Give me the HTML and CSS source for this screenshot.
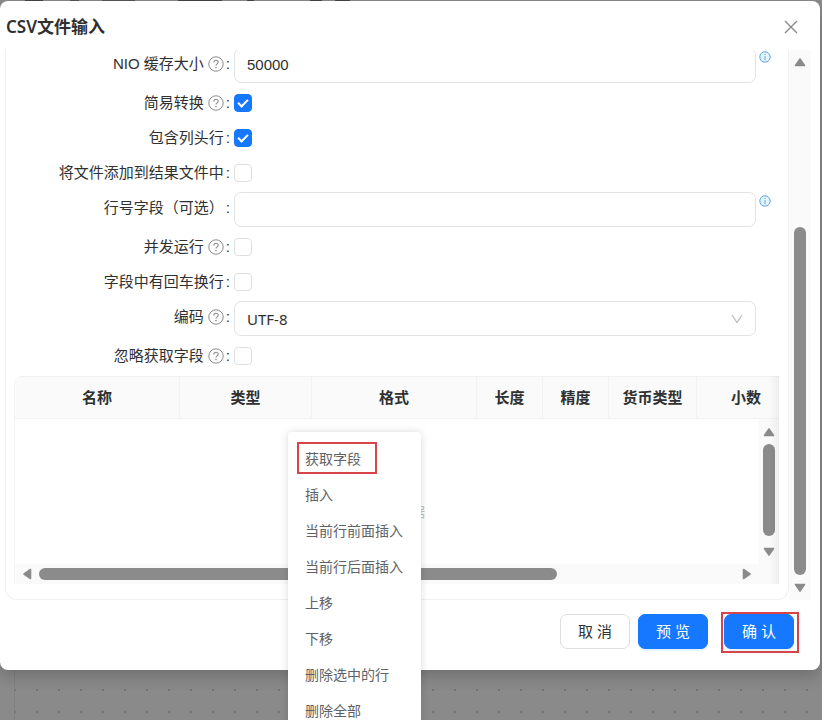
FILE: index.html
```html
<!DOCTYPE html>
<html lang="zh-CN">
<head>
<meta charset="UTF-8">
<meta name="viewport" content="width=device-width, initial-scale=1.0">
<title>CSV文件输入</title>
<link rel="stylesheet" href="styles.css">
</head>
<body>

<svg width="0" height="0" class="sprite">
  <symbol id="icon-help" viewBox="0 0 16 16">
    <circle cx="8" cy="8" r="7.2" fill="none" stroke="currentColor"/>
    <path d="M5.8 6.4c0-1.3 1-2.1 2.2-2.1s2.2.8 2.2 2c0 1.5-2.2 1.6-2.2 3.2" fill="none" stroke="currentColor" stroke-width="1.1"/>
    <circle cx="8" cy="11.6" r=".8" fill="currentColor"/>
  </symbol>
  <symbol id="icon-info" viewBox="0 0 12 12">
    <circle cx="6" cy="6" r="5.2" fill="#e6f4ff" stroke="#5aa5e6"/>
    <path d="M6 3v1M6 5v4" stroke="#5aa5e6"/>
  </symbol>
  <symbol id="icon-arrow" viewBox="0 0 12 10">
    <path d="M6 2L10.5 8.5H1.5Z" fill="#8b8b8b" stroke="#8b8b8b" stroke-width="1.6" stroke-linejoin="round"/>
  </symbol>
</svg>

<div class="modal" role="dialog" aria-labelledby="modalTitle">
  <div class="modal-header">
    <h2 id="modalTitle">CSV文件输入</h2>
    <button class="close-btn" aria-label="关闭">
      <svg width="14" height="14" viewBox="0 0 14 14"><path d="M1 1L13 13M13 1L1 13" stroke="#888" stroke-width="1.4"/></svg>
    </button>
  </div>

  <div class="modal-body">
    <div class="panel">
      <form class="form">
        <div class="row row-input">
          <label class="label" for="nio">NIO 缓存大小<svg class="help"><use href="#icon-help"/></svg><span class="colon">:</span></label>
          <input class="text-input" type="text" id="nio" value="50000">
          <svg class="info"><use href="#icon-info"/></svg>
        </div>
        <div class="row">
          <label class="label" for="lazy">简易转换<svg class="help"><use href="#icon-help"/></svg><span class="colon">:</span></label>
          <input class="checkbox" type="checkbox" id="lazy" checked>
        </div>
        <div class="row">
          <label class="label" for="header">包含列头行<span class="colon">:</span></label>
          <input class="checkbox" type="checkbox" id="header" checked>
        </div>
        <div class="row">
          <label class="label" for="addResult">将文件添加到结果文件中<span class="colon">:</span></label>
          <input class="checkbox" type="checkbox" id="addResult">
        </div>
        <div class="row row-input">
          <label class="label" for="rowNum">行号字段（可选）<span class="colon">:</span></label>
          <input class="text-input" type="text" id="rowNum">
          <svg class="info"><use href="#icon-info"/></svg>
        </div>
        <div class="row">
          <label class="label" for="parallel">并发运行<svg class="help"><use href="#icon-help"/></svg><span class="colon">:</span></label>
          <input class="checkbox" type="checkbox" id="parallel">
        </div>
        <div class="row">
          <label class="label" for="newline">字段中有回车换行<span class="colon">:</span></label>
          <input class="checkbox" type="checkbox" id="newline">
        </div>
        <div class="row row-input">
          <label class="label" for="encoding">编码<svg class="help"><use href="#icon-help"/></svg><span class="colon">:</span></label>
          <div class="select-wrap">
            <select id="encoding">
              <option>UTF-8</option>
            </select>
            <svg class="chevron" width="12" height="10" viewBox="0 0 12 10"><path d="M1 1L6 8.5L11 1" fill="none" stroke="#bfbfbf" stroke-width="1.3"/></svg>
          </div>
        </div>
        <div class="row">
          <label class="label" for="ignore">忽略获取字段<svg class="help"><use href="#icon-help"/></svg><span class="colon">:</span></label>
          <input class="checkbox" type="checkbox" id="ignore">
        </div>
      </form>

      <div class="grid">
        <table class="fields">
          <colgroup>
            <col class="col-l"><col class="col-m"><col class="col-l"><col class="col-s"><col class="col-s"><col class="col-t"><col class="col-d">
          </colgroup>
          <thead>
            <tr><th>名称</th><th>类型</th><th>格式</th><th>长度</th><th>精度</th><th>货币类型</th><th>小数</th></tr>
          </thead>
        </table>
        <div class="grid-body">
          <div class="empty">暂无数据</div>
          <div class="scroll-y">
            <svg class="arrow"><use href="#icon-arrow"/></svg>
            <div class="track"><div class="thumb"></div></div>
            <svg class="arrow down"><use href="#icon-arrow"/></svg>
          </div>
        </div>
        <div class="scroll-x">
          <svg class="arrow left"><use href="#icon-arrow"/></svg>
          <div class="track"><div class="thumb"></div></div>
          <svg class="arrow right"><use href="#icon-arrow"/></svg>
        </div>
      </div>
    </div>

    <div class="scroll-y scroll-main">
      <svg class="arrow"><use href="#icon-arrow"/></svg>
      <div class="track"><div class="thumb"></div></div>
      <svg class="arrow down"><use href="#icon-arrow"/></svg>
    </div>
  </div>

  <div class="modal-footer">
    <button class="btn">取 消</button>
    <button class="btn btn-primary">预 览</button>
    <div class="marked">
      <button class="btn btn-primary">确 认</button>
    </div>
  </div>
</div>

<div class="context-menu" role="menu">
  <button class="menu-item menu-marked" role="menuitem">获取字段</button>
  <button class="menu-item" role="menuitem">插入</button>
  <button class="menu-item" role="menuitem">当前行前面插入</button>
  <button class="menu-item" role="menuitem">当前行后面插入</button>
  <button class="menu-item" role="menuitem">上移</button>
  <button class="menu-item" role="menuitem">下移</button>
  <button class="menu-item" role="menuitem">删除选中的行</button>
  <button class="menu-item" role="menuitem">删除全部</button>
</div>

</body>
</html>
```
FILE: styles.css
```css
*, *::before, *::after {
  box-sizing: border-box;
}
html {
  height: 100%;
  overflow: hidden;
}
body {
  margin: 0;
  height: 100%;
  padding: 1px 2px 0 0;
  overflow: hidden;
  font-family: "Liberation Sans", "Noto Sans CJK SC", sans-serif;
  font-size: 15px;
  color: #303030;
  /* toolbar remains, side rule and dotted canvas behind the dialog */
  background-color: #8a8a8a;
  background-image:
    linear-gradient(to right, transparent 25px, #444 25px, #444 43px, transparent 43px, transparent 70px, #555 70px, #555 79px, transparent 79px, transparent 102px, #555 102px, #555 135px, transparent 135px, transparent 178px, #444 178px, #444 222px, transparent 222px, transparent 247px, #444 247px, #444 254px, transparent 254px, transparent 310px, #444 310px, #444 322px, transparent 322px, transparent 335px, #444 335px, #444 350px, transparent 350px),
    linear-gradient(#808080, #808080),
    radial-gradient(circle, #747474 1px, transparent 1px);
  background-size: 100% 1px, 1px 100%, 22px 22px;
  background-position: 0 0, 14px 0, 4px 19px;
  background-repeat: no-repeat, no-repeat, repeat;
}
button, input, select {
  font: inherit;
  color: inherit;
}
.sprite {
  position: absolute;
}

/* dialog */
.modal {
  background-color: #fff;
  border-radius: 8px;
  box-shadow: 0 6px 16px rgba(0, 0, 0, 0.2);
}
.modal-header {
  display: flex;
  align-items: center;
  justify-content: space-between;
  height: 49px;
  padding: 2px 20px 0 6px;
}
.modal-header h2 {
  margin: 0;
  font-family: "Noto Sans", "Noto Sans CJK SC", sans-serif;
  font-size: 17px;
  line-height: 24px;
  font-weight: 600;
}
.close-btn {
  display: flex;
  padding: 2px;
  border: none;
  background: none;
  cursor: pointer;
}
.modal-body {
  display: flex;
  margin: 0 9px 0 5px;
}
.panel {
  flex: 1;
  min-width: 0;
  height: 550px;
  padding: 0 9px 0 8px;
  border: 1px solid #f0f0f0;
  border-top: none;
  border-radius: 0 0 12px 12px;
  overflow: hidden;
}

/* form, scrolled a little past its first row */
.form {
  margin-top: -4px;
}
.row {
  display: flex;
  align-items: center;
  height: 35px;
}
.row-input {
  align-items: flex-start;
  height: 39px;
  padding: 2px 23px 2px 0;
}
.label {
  display: flex;
  align-items: center;
  justify-content: flex-end;
  width: 216px;
  margin-right: 4px;
  line-height: 32px;
  white-space: nowrap;
}
.help {
  width: 16px;
  height: 16px;
  margin-left: 4px;
  color: #8c8c8c;
}
.colon {
  margin-left: 2px;
}
.text-input, .select-wrap {
  flex: 1;
  min-width: 0;
  height: 35px;
}
.text-input, select {
  padding: 0 12px;
  border: 1px solid #e2e2e2;
  border-radius: 7px;
  background-color: #fff;
  outline: none;
}
.text-input {
  padding-bottom: 2px;
}
.row-input .info {
  width: 12px;
  height: 12px;
  margin: 3px -15px 0 3px;
}
.select-wrap {
  position: relative;
}
select {
  width: 100%;
  height: 100%;
  appearance: none;
  font-family: "Noto Sans", sans-serif;
}
.chevron {
  position: absolute;
  top: 13px;
  right: 13px;
  pointer-events: none;
}
.checkbox {
  appearance: none;
  position: relative;
  width: 18px;
  height: 18px;
  margin: 0;
  border: 1px solid #dfdfdf;
  border-radius: 4px;
  background-color: #fff;
}
.checkbox:checked {
  border-color: #1677ff;
  background-color: #1677ff;
}
.checkbox:checked::after {
  content: "";
  position: absolute;
  left: 5px;
  top: 2px;
  width: 6px;
  height: 10px;
  border: solid #fff;
  border-width: 0 2px 2px 0;
  transform: rotate(45deg);
}

/* field table */
.grid {
  position: relative;
  margin-top: 3px;
  border-left: 1px solid #f3f3f3;
  border-radius: 8px 0 0 0;
  overflow: hidden;
}
/* fade at the edge where more columns are hidden */
.grid::after {
  content: "";
  position: absolute;
  top: 0;
  right: 0;
  bottom: 0;
  width: 10px;
  background: linear-gradient(to right, rgba(0, 0, 0, 0), rgba(0, 0, 0, 0.05));
  pointer-events: none;
}
.fields {
  table-layout: fixed;
  width: 781px;
  border-collapse: separate;
  border-spacing: 0;
}
.col-l {
  width: 165px;
}
.col-m {
  width: 132px;
}
.col-s {
  width: 66px;
}
.col-t {
  width: 88px;
}
.col-d {
  width: 99px;
}
.fields th {
  height: 43px;
  padding: 0 0 2px;
  border: solid #f2f2f2;
  border-width: 1px 1px 1px 0;
  background-color: #fafafa;
  font-weight: 700;
}
.grid-body {
  display: flex;
  position: relative;
  justify-content: flex-end;
  height: 145px;
}
.empty {
  position: absolute;
  top: 83px;
  left: 0;
  right: 0;
  font-size: 14px;
  line-height: 20px;
  text-align: center;
  color: #bfbfbf;
}

/* scroll bars */
.scroll-y {
  display: flex;
  flex-direction: column;
  align-items: center;
  width: 20px;
  padding: 8px 0 7px;
  background-color: #fafafa;
}
.scroll-x {
  display: flex;
  align-items: center;
  height: 20px;
  padding: 0 26px 0 6px;
  background-color: #fafafa;
}
.arrow {
  flex: none;
  width: 12px;
  height: 10px;
}
.arrow.down {
  transform: rotate(180deg);
}
.arrow.left {
  transform: rotate(-90deg);
}
.arrow.right {
  transform: rotate(90deg);
}
.track {
  flex: 1;
}
.thumb {
  border-radius: 6px;
  background-color: #8b8b8b;
}
.scroll-y .track {
  width: 12px;
  margin: 7px 0 9px;
}
.grid-body .thumb {
  height: 92px;
}
.scroll-x .track {
  margin: 0 6px;
}
.scroll-x .thumb {
  width: 518px;
  height: 12px;
}
.scroll-main {
  width: 22px;
  padding-top: 7px;
}
.scroll-main .track {
  display: flex;
  flex-direction: column;
  justify-content: flex-end;
  margin: 7px 0 8px;
}
.scroll-main .thumb {
  height: 348px;
}

/* footer */
.modal-footer {
  display: flex;
  justify-content: flex-end;
  gap: 8px;
  padding: 14px 26px 21px;
}
.btn {
  display: block;
  width: 70px;
  height: 35px;
  padding: 0 0 2px;
  border: 1px solid #dedede;
  border-radius: 7px;
  background-color: #fff;
  cursor: pointer;
}
.btn-primary {
  border-color: #1677ff;
  background-color: #1677ff;
  color: #fff;
  box-shadow: 0 2px 0 rgba(5, 145, 255, 0.1);
}
.marked {
  position: relative;
  margin-left: 8px;
}
.marked::after {
  content: "";
  position: absolute;
  inset: -2px -5px -4px -3px;
  border: 2px solid #d9444a;
  pointer-events: none;
}

/* right-click menu */
.context-menu {
  position: absolute;
  top: 432px;
  left: 288px;
  width: 133px;
  padding: 8px 0;
  border-radius: 4px;
  background-color: #fff;
  box-shadow: 0 0 8px rgba(0, 0, 0, 0.15);
}
.menu-item {
  display: block;
  position: relative;
  width: 100%;
  height: 36px;
  padding: 0 17px;
  border: none;
  background: none;
  font-size: 14px;
  text-align: left;
  white-space: nowrap;
  color: #606266;
  cursor: pointer;
}
.menu-marked::after {
  content: "";
  position: absolute;
  top: 2px;
  left: 9px;
  width: 80px;
  height: 32px;
  border: 2px solid #d9444a;
}
```
